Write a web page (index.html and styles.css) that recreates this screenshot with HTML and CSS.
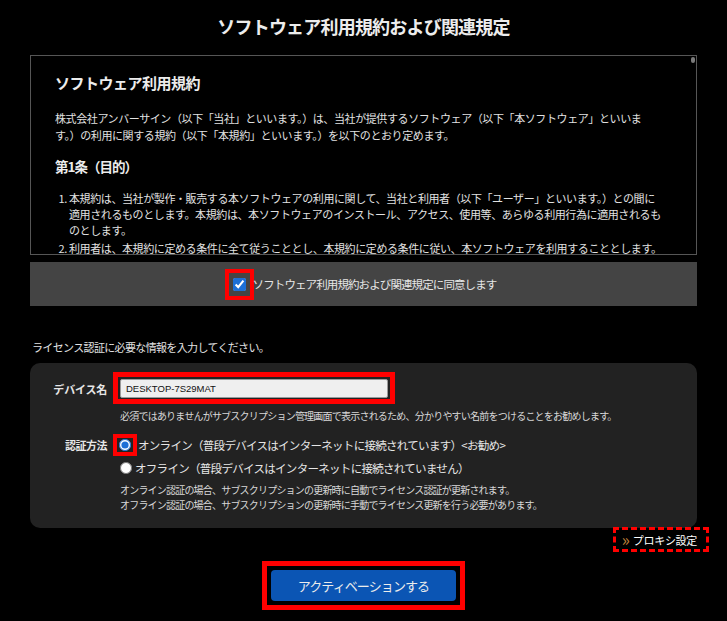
FILE: index.html
```html
<!DOCTYPE html>
<html lang="ja">
<head>
<meta charset="utf-8">
<title>ソフトウェア利用規約および関連規定</title>
<link rel="stylesheet" href="styles.css">
</head>
<body>
<div class="page">
  <h1 class="title">ソフトウェア利用規約および関連規定</h1>

  <div class="terms">
    <div class="terms-body">
      <h2 class="terms-heading">ソフトウェア利用規約</h2>
      <p class="terms-text">株式会社アンバーサイン（以下「当社」といいます。）は、当社が提供するソフトウェア（以下「本ソフトウェア」といいま<br>す。）の利用に関する規約（以下「本規約」といいます。）を以下のとおり定めます。</p>
      <h3 class="terms-article">第1条（目的）</h3>
      <ol class="terms-list">
        <li>本規約は、当社が製作・販売する本ソフトウェアの利用に関して、当社と利用者（以下「ユーザー」といいます。）との間に<br>適用されるものとします。本規約は、本ソフトウェアのインストール、アクセス、使用等、あらゆる利用行為に適用されるも<br>のとします。</li>
        <li>利用者は、本規約に定める条件に全て従うこととし、本規約に定める条件に従い、本ソフトウェアを利用することとします。</li>
      </ol>
    </div>
  </div>

  <div class="agree">
    <label class="agree-label">
      <span class="mark mark-check"><input type="checkbox" class="agree-check" checked></span>
      <span class="agree-text">ソフトウェア利用規約および関連規定に同意します</span>
    </label>
  </div>

  <p class="intro">ライセンス認証に必要な情報を入力してください。</p>

  <div class="panel">
    <div class="field-label label-device">デバイス名</div>
    <div class="field">
      <span class="mark mark-input"><input type="text" class="device-input" value="DESKTOP-7S29MAT"></span>
      <p class="help">必須ではありませんがサブスクリプション管理画面で表示されるため、分かりやすい名前をつけることをお勧めします。</p>
    </div>

    <div class="field-label label-method">認証方法</div>
    <div class="field">
      <label class="radio-row">
        <span class="mark mark-radio"><input type="radio" name="method" class="radio" checked></span>
        <span>オンライン（普段デバイスはインターネットに接続されています）&lt;お勧め&gt;</span>
      </label>
      <label class="radio-row radio-row-second">
        <input type="radio" name="method" class="radio">
        <span>オフライン（普段デバイスはインターネットに接続されていません）</span>
      </label>
      <p class="notes">オンライン認証の場合、サブスクリプションの更新時に自動でライセンス認証が更新されます。<br>オフライン認証の場合、サブスクリプションの更新時に手動でライセンス更新を行う必要があります。</p>
    </div>
  </div>

  <div class="proxy-row">
    <a class="proxy" href="#"><span class="proxy-chev">»</span><span>プロキシ設定</span></a>
  </div>

  <div class="actions">
    <span class="mark mark-button"><button type="button" class="activate">アクティベーションする</button></span>
  </div>
</div>
</body>
</html>
```

FILE: styles.css
```css
* {
  box-sizing: border-box;
}

html, body {
  margin: 0;
  padding: 0;
  background: #000;
}

body {
  font-family: "Noto Sans CJK JP", "Noto Sans", sans-serif;
  color: #e2e2e2;
}

.page {
  width: 667px;
  margin: 0 auto;
}

.title {
  margin: 0;
  padding: 14px 0 17px;
  font-size: 18px;
  line-height: 24px;
  font-weight: 700;
  letter-spacing: -0.8px;
  text-align: center;
  color: #ececec;
}

.terms {
  position: relative;
  height: 200px;
  border: 1px solid #565656;
  background: #000;
  overflow: hidden;
}

.terms::after {
  content: "";
  position: absolute;
  top: 1px;
  right: 1px;
  width: 4px;
  height: 6px;
  border-radius: 2px;
  background: #7a7a7a;
}

.terms-body {
  padding: 17px 0 0 24px;
}

.terms-heading {
  margin: 0;
  font-size: 15px;
  line-height: 20px;
  font-weight: 700;
  letter-spacing: -0.5px;
  color: #ececec;
}

.terms-text {
  margin: 17px 0 0;
  font-size: 11px;
  line-height: 17px;
  letter-spacing: -0.4px;
  white-space: nowrap;
}

.terms-article {
  margin: 12px 0 0;
  font-size: 13.5px;
  line-height: 20px;
  font-weight: 700;
  letter-spacing: -1px;
  color: #ececec;
}

.terms-list {
  margin: 14px 0 0;
  padding-left: 14px;
  font-size: 11px;
  line-height: 16px;
  letter-spacing: -0.4px;
  white-space: nowrap;
}

.terms-list li + li {
  margin-top: 2px;
}

/* red highlight frames */
.mark {
  display: inline-flex;
  align-items: center;
  justify-content: center;
  border-style: solid;
  border-color: #ff0000;
}

.mark-check {
  border-width: 4px;
  padding: 5px 4px;
}

.mark-input {
  border-width: 5px;
  padding: 2px 2px 1px;
}

.mark-radio {
  border-width: 4px;
  padding: 1px 2px;
}

.mark-button {
  border-width: 5px;
  padding: 4px;
}

.agree {
  margin-top: 7px;
  height: 44px;
  background: #444;
  display: flex;
  align-items: center;
  justify-content: center;
}

.agree-label {
  display: flex;
  align-items: center;
  font-size: 11.5px;
  line-height: 16px;
  letter-spacing: -0.9px;
  color: #e6e6e6;
  margin-left: -6px;
}

.agree-text {
  margin-left: -1px;
}

.agree-check {
  display: block;
  width: 13px;
  height: 13px;
  margin: 0;
  accent-color: #1c6fd6;
}

.intro {
  margin: 33px 0 8px;
  padding-left: 2px;
  font-size: 11px;
  line-height: 16px;
  letter-spacing: -0.65px;
  color: #e2e2e2;
}

.panel {
  background: #222;
  border-radius: 10px;
  padding: 9px 0 16px;
  display: grid;
  grid-template-columns: 77px 1fr;
  column-gap: 6px;
  row-gap: 11px;
}

.field-label {
  text-align: right;
  font-size: 11px;
  font-weight: 700;
  color: #e6e6e6;
}

.label-device {
  padding-top: 7px;
  line-height: 21px;
  letter-spacing: -0.2px;
}

.label-method {
  line-height: 22px;
  letter-spacing: -0.5px;
}

.field {
  display: flex;
  flex-direction: column;
  align-items: flex-start;
}

.device-input {
  display: block;
  width: 268px;
  height: 19px;
  margin: 0;
  padding: 0 5px;
  border: 1px solid #9a9a9a;
  border-radius: 2px;
  background: #efefef;
  color: #111;
  font-family: "Liberation Sans", Arial, sans-serif;
  font-size: 9.5px;
  outline: none;
}

.help {
  margin: 5px 0 0 7px;
  font-size: 10px;
  line-height: 14px;
  letter-spacing: -0.78px;
  color: #d8d8d8;
}

.radio-row {
  display: flex;
  align-items: center;
  gap: 1px;
  font-size: 11.5px;
  line-height: 22px;
  letter-spacing: -0.7px;
  color: #e6e6e6;
}

.radio-row-second {
  margin-top: 2px;
  margin-left: 7px;
  line-height: 20px;
  gap: 3px;
}

.radio {
  display: block;
  width: 12px;
  height: 12px;
  margin: 0;
  accent-color: #1c6fd6;
}

.notes {
  margin: 4px 0 0 7px;
  font-size: 10px;
  line-height: 15px;
  letter-spacing: -0.8px;
  color: #d8d8d8;
}

.proxy-row {
  display: flex;
  justify-content: flex-end;
  margin-right: -12px;
  margin-top: -1px;
}

.proxy {
  display: inline-flex;
  align-items: center;
  gap: 3px;
  height: 25px;
  padding: 0 9px 0 6px;
  border: 3px dashed #ff0000;
  color: #ffffff;
  text-decoration: none;
  font-size: 11px;
  letter-spacing: -0.3px;
  line-height: 16px;
}

.proxy-chev {
  color: #c4843c;
  font-size: 17px;
  line-height: 16px;
  letter-spacing: 0;
  margin-top: -2px;
}

.actions {
  margin-top: 9px;
  display: flex;
  justify-content: center;
}

.activate {
  display: block;
  width: 185px;
  height: 31px;
  border: none;
  border-radius: 4px;
  background: #0b55b4;
  color: #ececec;
  font-family: "Noto Sans CJK JP", "Noto Sans", sans-serif;
  font-size: 13px;
  letter-spacing: -0.9px;
  cursor: pointer;
}
```
